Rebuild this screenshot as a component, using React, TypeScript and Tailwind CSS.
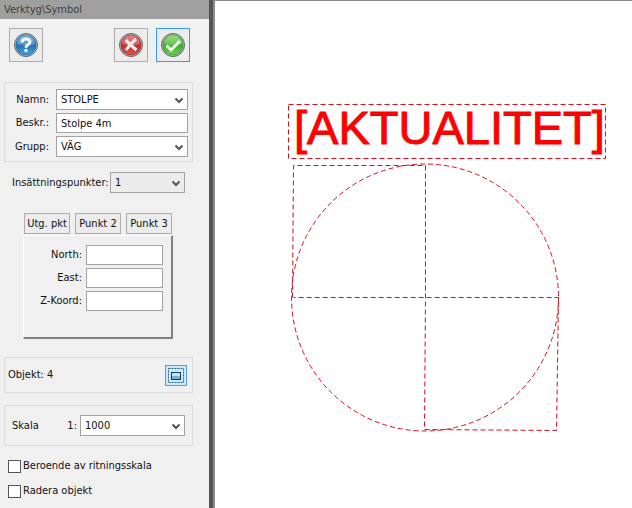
import { useState } from "react";
import type { ReactNode, SelectHTMLAttributes } from "react";
import clsx from "clsx";

const points = ["Utg. pkt", "Punkt 2", "Punkt 3"];
const coords = ["North", "East", "Z-Koord"];

function RoundIcon({ id, light, dark, children }: { id: string; light: string; dark: string; children: ReactNode }) {
  return (
    <svg width="26" height="26" viewBox="0 0 26 26" aria-hidden="true">
      <defs>
        <linearGradient id={id} x1="0" y1="0" x2="0" y2="1">
          <stop offset="0" stopColor={light} />
          <stop offset="0.5" stopColor={dark} />
          <stop offset="1" stopColor={light} />
        </linearGradient>
      </defs>
      <circle cx="13" cy="13" r="11.5" fill="#c3c8cc" stroke="#5c6468" />
      <circle cx="13" cy="13" r="10" fill={`url(#${id})`} stroke={dark} />
      <path d="M4 12a9 9 0 0 1 18 0q-9 3-18 0z" fill="#fff" opacity="0.25" />
      {children}
    </svg>
  );
}

function Select({ className, children, ...props }: SelectHTMLAttributes<HTMLSelectElement>) {
  return (
    <div className={clsx("relative border border-[#a3a3a3]", className)}>
      <select {...props} className="block h-full w-full appearance-none bg-transparent pl-1 pr-5 outline-none">
        {children}
      </select>
      <svg className="pointer-events-none absolute right-1 top-[7px] h-2 w-2" viewBox="0 0 8 8" aria-hidden="true">
        <path d="M0.5 1.5L4 5L7.5 1.5" fill="none" stroke="#555" strokeWidth="2" />
      </svg>
    </div>
  );
}

export default function App() {
  const [point, setPoint] = useState(0);

  return (
    <div className="flex min-h-screen bg-white font-['DejaVu_Sans_Condensed','DejaVu_Sans',sans-serif] text-[11px] leading-4 text-[#111]">
      <aside className="w-[209px] shrink-0 bg-[#f0f0f0]">
        <h1 className="h-[19px] bg-[#9f9f9f] pl-1 leading-[19px] text-[#404040]">Verktyg\Symbol</h1>

        <div className="flex gap-2 pl-[9px] pr-[19px] pt-[9px]">
          <button type="button" aria-label="Hjälp" className="mr-auto flex size-[34px] items-center justify-center border border-[#adadad] bg-[#ececec]">
            <RoundIcon id="help" light="#4ba3dc" dark="#2270b0">
              <path d="M9 10.500q0-3.500 4-3.500t4 3q0 1.500-2 2.700q-2 1-2 3" fill="none" stroke="#f4f8fb" strokeWidth="3" />
              <circle cx="13" cy="18.500" r="1.700" fill="#f4f8fb" />
            </RoundIcon>
          </button>
          <button type="button" aria-label="Avbryt" className="flex size-[34px] items-center justify-center border border-[#adadad] bg-[#ececec]">
            <RoundIcon id="cancel" light="#de5555" dark="#b72e30">
              <path d="M8 8q3 4 10.500 10M18 7q-6 5-10 11" fill="none" stroke="#f8ecec" strokeWidth="3" />
            </RoundIcon>
          </button>
          <button type="button" aria-label="OK" className="flex size-[34px] items-center justify-center border border-[#3399ff] bg-[#ececec]">
            <RoundIcon id="ok" light="#75d64d" dark="#3ba62c">
              <path d="M6.500 13.500l4.500 4.500l9-9" fill="none" stroke="#f1faee" strokeWidth="3" />
            </RoundIcon>
          </button>
        </div>

        <div className="ml-1 mr-4 mt-5 grid grid-cols-[44px_1fr] items-center gap-x-[7px] gap-y-[3px] border border-[#dcdcdc] pb-1 pr-1 pt-[6px] text-right">
          <label htmlFor="namn">Namn:</label>
          <Select id="namn" className="h-[21px] bg-white">
            <option>STOLPE</option>
          </Select>
          <label htmlFor="beskr">Beskr.:</label>
          <input id="beskr" defaultValue="Stolpe 4m" className="h-5 w-full border border-[#a3a3a3] bg-white px-1 outline-none" />
          <label htmlFor="grupp">Grupp:</label>
          <Select id="grupp" className="h-[21px] bg-white">
            <option>VÄG</option>
          </Select>
        </div>

        <div className="mt-[10px] flex items-center pl-3">
          <label htmlFor="punkter" className="w-[98px]">Insättningspunkter:</label>
          <Select id="punkter" className="h-[21px] w-[75px] bg-[#ececec]">
            <option>1</option>
          </Select>
        </div>

        <div className="mt-5 flex gap-[5px] pl-6">
          {points.map((name, i) => (
            <button key={name} type="button" onClick={() => setPoint(i)} aria-pressed={point === i} className="h-[21px] w-[46px] whitespace-nowrap border border-[#adadad] bg-[#ececec]">
              {name}
            </button>
          ))}
        </div>
        <div className="ml-[23px] mt-px grid h-[104px] w-[150px] grid-cols-[58px_77px] content-start items-center gap-x-1 gap-y-[3px] border border-b-2 border-r-2 border-b-[#808080] border-l-white border-r-[#808080] border-t-white pt-[9px] text-right">
          {coords.map((name) => (
            <div key={name} className="contents">
              <label htmlFor={name}>{name}:</label>
              <input id={name} className="h-5 w-full border border-[#a3a3a3] bg-white px-1 text-left outline-none" />
            </div>
          ))}
        </div>

        <div className="ml-1 mr-4 mt-[18px] flex h-9 items-center justify-between border border-[#dcdcdc] pl-[3px] pr-[5px]">
          <span>Objekt: 4</span>
          <button type="button" aria-label="Välj objekt" className="border border-[#569de5] bg-[#cce8fa]">
            <svg width="20" height="19" viewBox="0 0 20 19" aria-hidden="true">
              <rect x="2.500" y="2.500" width="15" height="14" fill="none" stroke="#2d6290" strokeDasharray="2 1" />
              <path d="M6 7h8v3h-8z" fill="#c4e4f4" />
              <path d="M6 10h8v3h-8z" fill="#6fb5da" />
              <rect x="5.500" y="6.500" width="9" height="7" fill="none" stroke="#183c5c" />
            </svg>
          </button>
        </div>

        <div className="ml-1 mr-4 mt-3 flex h-[41px] items-center border border-[#dcdcdc] pl-[7px] pr-[7px]">
          <span className="mr-auto">Skala</span>
          <label htmlFor="skala" className="mr-[3px]">1:</label>
          <Select id="skala" className="h-[21px] w-[105px] bg-white">
            <option>1000</option>
          </Select>
        </div>

        <div className="mt-3 flex flex-col gap-[9px] pl-2">
          {["Beroende av ritningsskala", "Radera objekt"].map((name) => (
            <label key={name} className="flex items-center gap-[2px]">
              <input type="checkbox" className="size-[13px] appearance-none border border-[#555] bg-white checked:bg-[#555]" />
              {name}
            </label>
          ))}
        </div>
      </aside>

      <main className="min-w-0 flex-1 border-l-4 border-[#555]">
        <div className="min-h-screen border-l-2 border-t border-l-[#8b8b8b] border-t-[#8b8b8b]">
          <svg width="417" height="500" viewBox="215 1 417 500" role="img" aria-label="Symbol" fill="none" stroke="#d01020" strokeDasharray="5 3">
            <rect x="288.500" y="104.500" width="317" height="54" />
            <text x="294" y="144" fill="#f00" stroke="#f00" strokeDasharray="none" fontFamily="Liberation Sans, sans-serif" fontSize="47">[AKTUALITET]</text>
            <path d="M292.500 297.500L293.500 165.500H425.500V297.500L424.500 429.500L556.500 430.500L558.500 297.500H293.500" />
            <circle cx="425" cy="297.500" r="133.500" />
          </svg>
        </div>
      </main>
    </div>
  );
}
